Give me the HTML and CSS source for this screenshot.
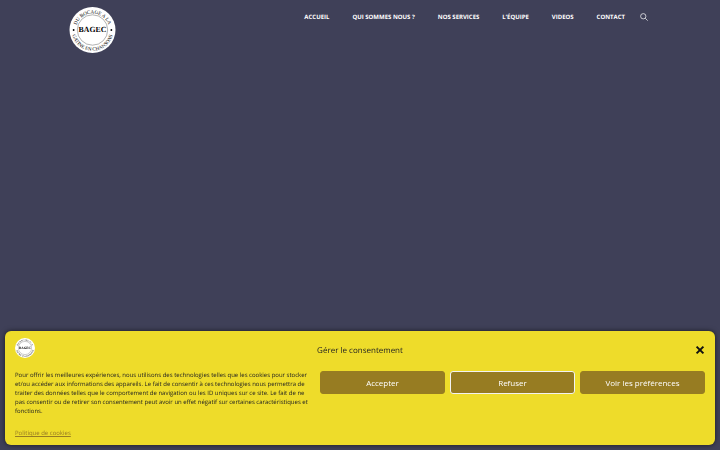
FILE: index.html
```html
<!DOCTYPE html>
<html lang="fr">
<head>
  <meta charset="UTF-8" />
  <meta name="viewport" content="width=device-width, initial-scale=1" />
  <title>BAGEC</title>
  <link rel="stylesheet" href="styles.css">
</head>
<body>

<!-- En-tête -->
<header class="site-header">
  <a href="#" class="logo" aria-label="BAGEC">
    <svg viewBox="0 0 100 100">
      <defs>
        <path id="arcTop" d="M14 50 A36 36 0 0 1 86 50" />
        <path id="arcBottom" d="M5 50 A45 45 0 0 0 95 50" />
      </defs>
      <circle cx="50" cy="50" r="50" fill="#fff" />
      <circle cx="50" cy="50" r="33" fill="none" stroke="#555" stroke-width="1" />
      <circle cx="9" cy="50" r="2" />
      <circle cx="91" cy="50" r="2" />
      <text class="ring-text"><textPath href="#arcTop" startOffset="50%">DU BOCAGE A LA</textPath></text>
      <text class="ring-text"><textPath href="#arcBottom" startOffset="50%">GATINE EN CHANSONS</textPath></text>
      <text class="logo-name" x="50" y="55">BAGEC</text>
    </svg>
  </a>
  <nav class="menu">
    <a href="#">ACCUEIL</a>
    <a href="#">QUI SOMMES NOUS ?</a>
    <a href="#">NOS SERVICES</a>
    <a href="#">L’ÉQUIPE</a>
    <a href="#">VIDEOS</a>
    <a href="#">CONTACT</a>
    <button class="search" aria-label="Rechercher">
      <svg viewBox="0 0 16 16">
        <circle cx="6.5" cy="6.5" r="5.3" />
        <path d="M10.5 10.5 L15.3 15.3" />
      </svg>
    </button>
  </nav>
</header>

<!-- Bandeau cookies -->
<section class="cookie-banner" aria-labelledby="cookieTitle">
  <div class="banner-header">
    <svg class="banner-logo" viewBox="0 0 100 100">
      <circle cx="50" cy="50" r="50" fill="#fff" />
      <circle cx="50" cy="50" r="33" fill="none" stroke="#888" stroke-width="2" />
      <text class="ring-text"><textPath href="#arcTop" startOffset="50%">DU BOCAGE A LA</textPath></text>
      <text class="ring-text"><textPath href="#arcBottom" startOffset="50%">GATINE EN CHANSONS</textPath></text>
      <text class="logo-name" x="50" y="55">BAGEC</text>
    </svg>
    <h2 id="cookieTitle">Gérer le consentement</h2>
    <button class="close" aria-label="Fermer">
      <svg viewBox="0 0 10 10"><path d="M1.6 1.6 L8.4 8.4 M8.4 1.6 L1.6 8.4" /></svg>
    </button>
  </div>
  <div class="banner-body">
    <p>Pour offrir les meilleures expériences, nous utilisons des technologies telles que les cookies pour stocker et/ou accéder aux informations des appareils. Le fait de consentir à ces technologies nous permettra de traiter des données telles que le comportement de navigation ou les ID uniques sur ce site. Le fait de ne pas consentir ou de retirer son consentement peut avoir un effet négatif sur certaines caractéristiques et fonctions.</p>
    <div class="btn-group">
      <button>Accepter</button>
      <button class="deny">Refuser</button>
      <button>Voir les préférences</button>
    </div>
  </div>
  <a href="#" class="policy">Politique de cookies</a>
</section>

</body>
</html>
```
FILE: styles.css
```css
* { box-sizing: border-box; }
body {
  font-family: "Open Sans", sans-serif;
  background: #3f4058;
  margin: 0;
  text-rendering: geometricPrecision;
}
button {
  font-family: inherit;
  cursor: pointer;
}

.site-header {
  display: flex;
  justify-content: space-between;
  align-items: flex-start;
  max-width: 600px;
  margin: 0 auto;
  padding: 7px 12px 0 9px;
}
.logo svg {
  display: block;
  width: 47px;
  height: 46px;
}
.ring-text {
  font: 11px "Liberation Serif", serif;
  text-anchor: middle;
}
.logo-name {
  font: bold 17px "Liberation Serif", serif;
  text-anchor: middle;
}
.menu {
  display: flex;
  align-items: center;
  gap: 23px;
  height: 20px;
}
.menu a {
  color: #fff;
  font-size: 6px;
  font-weight: bold;
  text-decoration: none;
}
.search {
  width: 8px;
  height: 8px;
  margin-left: -8px;
  padding: 0;
  border: 0;
  background: none;
}
.search svg {
  display: block;
  fill: none;
  stroke: #fff;
  stroke-width: 1.4;
}

.cookie-banner {
  position: fixed;
  left: 5px;
  right: 5px;
  bottom: 5px;
  padding: 7px 10px 5px;
  border-radius: 6px;
  background: #eedc2a;
  color: #222;
  box-shadow: 0 0 5px rgba(0,0,0,0.6);
}
.banner-header {
  display: grid;
  grid-template-columns: 1fr auto 1fr;
  align-items: center;
  margin-bottom: 13px;
}
.banner-logo {
  width: 20px;
  height: 20px;
}
.banner-header h2 {
  margin: 0;
  padding-top: 4px;
  font-size: 8px;
  font-weight: normal;
}
.close {
  justify-self: end;
  width: 10px;
  height: 14px;
  padding: 4px 0 0;
  border: 0;
  background: none;
}
.close svg {
  display: block;
  stroke: #111;
  stroke-width: 2;
}
.banner-body {
  display: flex;
  gap: 10px;
}
.banner-body p {
  flex: 295;
  margin: 0;
  font-size: 6px;
  line-height: 9px;
}
.btn-group {
  flex: 385;
  display: flex;
  align-items: flex-start;
  gap: 5px;
}
.btn-group button {
  flex: 1;
  height: 23px;
  padding: 0;
  border: 1px solid #977c22;
  border-radius: 3px;
  background: #977c22;
  color: #fff;
  font-size: 8px;
}
.btn-group .deny {
  border-color: #f2f2f2;
}
.policy {
  display: inline-block;
  margin-top: 12px;
  color: #977c22;
  font-size: 6px;
  line-height: 10px;
}
```
